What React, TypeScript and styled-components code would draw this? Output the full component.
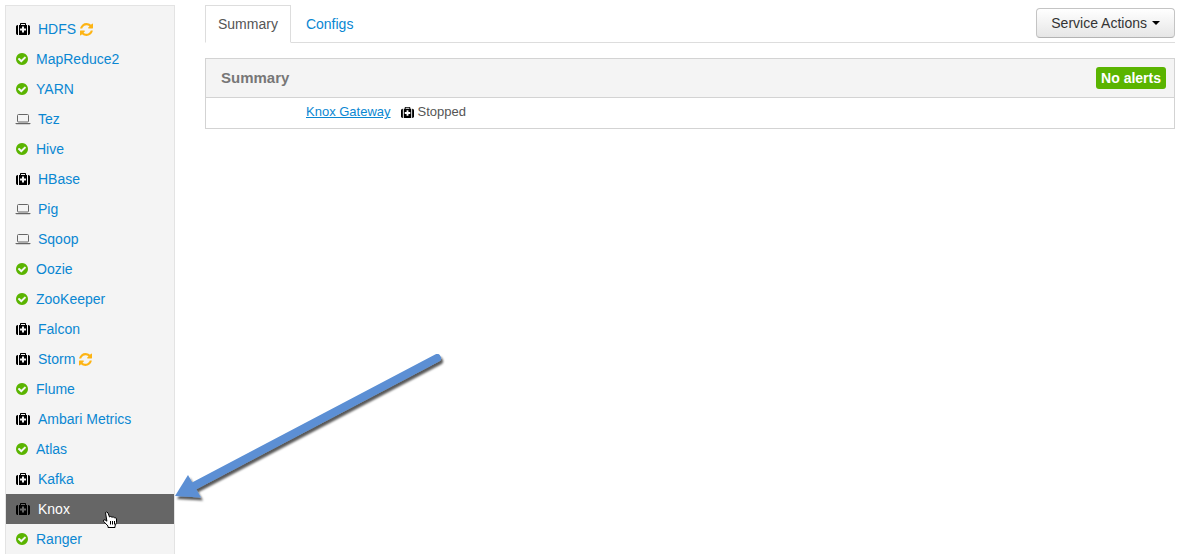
import React from "react";
import styled, { createGlobalStyle } from "styled-components";

const GlobalStyle = createGlobalStyle`
  * { box-sizing: border-box; }
  body {
    margin: 0;
    background: #fff;
    color: #333;
    font: 14px/20px "Liberation Sans", Arial, sans-serif;
  }
  a { color: #0a87d2; text-decoration: none; }
`;

const Page = styled.div`
  position: relative;
  display: flex;
  align-items: stretch;
  gap: 30px;
  min-height: 100vh;
  padding: 5px 10px 0 5px;
`;

const Sidebar = styled.nav`
  flex: 0 0 170px;
  background: #f4f4f4;
  border: 1px solid #e3e3e3;
  border-bottom: 0;
`;

const ServiceList = styled.ul`
  list-style: none;
  margin: 0;
  padding: 8px 0 0;
`;

const ServiceLink = styled.a<{ $active?: boolean }>`
  display: flex;
  align-items: center;
  height: 30px;
  padding: 0 10px;
  gap: 8px;
  background: ${(p) => (p.$active ? "#666" : "transparent")};
  && { color: ${(p) => (p.$active ? "#fff" : "#0a87d2")}; }
`;

const ServiceName = styled.span`
  display: flex;
  align-items: center;
  gap: 4px;
`;

const Main = styled.main`
  flex: 1;
  min-width: 0;
`;

const TabBar = styled.div`
  display: flex;
  justify-content: space-between;
  align-items: flex-start;
  height: 38px;
  border-bottom: 1px solid #ddd;
`;

const Tabs = styled.div`
  display: flex;
  gap: 2px;
`;

const Tab = styled.a<{ $active?: boolean }>`
  height: 38px;
  padding: 8px 12px;
  border: 1px solid ${(p) => (p.$active ? "#ddd" : "transparent")};
  border-bottom-color: ${(p) => (p.$active ? "#fff" : "transparent")};
  && { color: ${(p) => (p.$active ? "#555" : "#0a87d2")}; }
`;

const ActionsButton = styled.button`
  display: flex;
  align-items: center;
  gap: 5px;
  height: 30px;
  margin-top: 3px;
  padding: 0 14px;
  border: 1px solid #c4c4c4;
  border-bottom-color: #b3b3b3;
  border-radius: 4px;
  background: linear-gradient(#fff, #e6e6e6);
  box-shadow: inset 0 1px 0 #fff;
  color: #333;
  font: inherit;
`;

const Caret = styled.span`
  border-top: 4px solid #000;
  border-left: 4px solid transparent;
  border-right: 4px solid transparent;
`;

const Panel = styled.section`
  margin-top: 15px;
  border: 1px solid #d3d3d3;
`;

const PanelHeader = styled.header`
  display: flex;
  align-items: center;
  justify-content: space-between;
  height: 39px;
  padding: 0 8px 0 15px;
  background: #f4f4f4;
  border-bottom: 1px solid #d3d3d3;
`;

const PanelTitle = styled.h4`
  margin: 0;
  color: #777;
  font-size: 15px;
`;

const AlertBadge = styled.span`
  padding: 1px 5px;
  border-radius: 3px;
  background: #5ab400;
  color: #fff;
  font-weight: bold;
`;

const ComponentRow = styled.div`
  display: flex;
  align-items: center;
  gap: 10px;
  height: 30px;
  padding: 0 0 2px 100px;
  font-size: 13px;

  a { text-decoration: underline; }
`;

const Status = styled.span`
  display: flex;
  align-items: center;
  gap: 4px;
  color: #555;
`;

const Overlay = styled.svg`
  position: absolute;
  top: 0;
  left: 0;
  pointer-events: none;
`;

type Health = "stopped" | "ok" | "client";

const MedkitIcon = ({ size = 14 }: { size?: number }) => (
  <svg width={size} height={size} viewBox="0 0 1792 1792" fill="#000" aria-hidden="true">
    <path d="M1280 1056v-192q0-14-9-23t-23-9h-224v-224q0-14-9-23t-23-9h-192q-14 0-23 9t-9 23v224h-224q-14 0-23 9t-9 23v192q0 14 9 23t23 9h224v224q0 14 9 23t23 9h192q14 0 23-9t9-23v-224h224q14 0 23-9t9-23zm-640-672h512v-128h-512v128zm-384 0v1280h-32q-92 0-158-66t-66-158v-832q0-92 66-158t158-66h32zm1152 0v1280h-1024v-1280h128v-160q0-40 28-68t68-28h576q40 0 68 28t28 68v160h128zm384 224v832q0 92-66 158t-158 66h-32v-1280h32q92 0 158 66t66 158z" />
  </svg>
);

const CheckIcon = () => (
  <svg width="12" height="12" viewBox="128 128 1536 1536" fill="#5ab400" aria-hidden="true">
    <path d="M1412 734q0-28-18-46l-91-90q-19-19-45-19t-45 19l-408 407-226-226q-19-19-45-19t-45 19l-91 90q-18 18-18 46 0 27 18 45l362 362q19 19 45 19 27 0 46-19l543-543q18-18 18-45zm252 162q0 209-103 385.5t-279.5 279.5-385.5 103-385.5-103-279.5-279.5-103-385.5 103-385.5 279.5-279.5 385.5-103 385.5 103 279.5 279.5 103 385.5z" />
  </svg>
);

const LaptopIcon = () => (
  <svg width="14" height="12" viewBox="0 0 14 12" aria-hidden="true" overflow="visible">
    <rect x="1.500" y="1.500" width="11" height="7.500" rx="1" fill="none" stroke="#666" />
    <path d="M-.5 10h15v.4q0 .8-1 .8h-13q-1 0-1-.8z" fill="#666" />
  </svg>
);

const RefreshIcon = () => (
  <svg width="13" height="13" viewBox="0 0 1536 1536" fill="#fdb414" role="img" aria-label="Restart required">
    <path d="M1511 928q0 5-1 7-64 268-268 434.5t-478 166.500q-146 0-282.500-55t-243.500-157l-129 129q-19 19-45 19t-45-19-19-45v-448q0-26 19-45t45-19h448q26 0 45 19t19 45-19 45l-137 137q71 66 161 102t187 36q134 0 250-65t186-179q11-17 53-117 8-23 30-23h192q13 0 22.500 9.500t9.500 22.500zm25-800v448q0 26-19 45t-45 19h-448q-26 0-45-19t-19-45 19-45l138-138q-148-137-349-137-134 0-250 65t-186 179q-11 17-53 117-8 23-30 23h-199q-13 0-22.500-9.500t-9.500-22.500v-7q65-268 270-434.500t480-166.500q146 0 284 55.500t245 156.500l130-129q19-19 45-19t45 19 19 45z" />
  </svg>
);

const healthIcons: Record<Health, React.ReactNode> = {
  stopped: <MedkitIcon />,
  ok: <CheckIcon />,
  client: <LaptopIcon />,
};

const services: { name: string; health: Health; restart?: boolean; active?: boolean }[] = [
  { name: "HDFS", health: "stopped", restart: true },
  { name: "MapReduce2", health: "ok" },
  { name: "YARN", health: "ok" },
  { name: "Tez", health: "client" },
  { name: "Hive", health: "ok" },
  { name: "HBase", health: "stopped" },
  { name: "Pig", health: "client" },
  { name: "Sqoop", health: "client" },
  { name: "Oozie", health: "ok" },
  { name: "ZooKeeper", health: "ok" },
  { name: "Falcon", health: "stopped" },
  { name: "Storm", health: "stopped", restart: true },
  { name: "Flume", health: "ok" },
  { name: "Ambari Metrics", health: "stopped" },
  { name: "Atlas", health: "ok" },
  { name: "Kafka", health: "stopped" },
  { name: "Knox", health: "stopped", active: true },
  { name: "Ranger", health: "ok" },
];

export default function App() {
  return (
    <Page>
      <GlobalStyle />
      <Sidebar aria-label="Services">
        <ServiceList>
          {services.map((s) => (
            <li key={s.name}>
              <ServiceLink href="#" $active={s.active}>
                {healthIcons[s.health]}
                <ServiceName>
                  {s.name}
                  {s.restart && <RefreshIcon />}
                </ServiceName>
              </ServiceLink>
            </li>
          ))}
        </ServiceList>
      </Sidebar>
      <Main>
        <TabBar>
          <Tabs>
            <Tab href="#" $active>Summary</Tab>
            <Tab href="#">Configs</Tab>
          </Tabs>
          <ActionsButton type="button">
            Service Actions <Caret />
          </ActionsButton>
        </TabBar>
        <Panel>
          <PanelHeader>
            <PanelTitle>Summary</PanelTitle>
            <AlertBadge>No alerts</AlertBadge>
          </PanelHeader>
          <ComponentRow>
            <a href="#">Knox Gateway</a>
            <Status>
              <MedkitIcon size={13} />
              Stopped
            </Status>
          </ComponentRow>
        </Panel>
      </Main>
      <Overlay width="460" height="550" viewBox="0 0 460 550" aria-hidden="true">
        <defs>
          <filter id="arrowShadow" x="-10%" y="-10%" width="120%" height="120%">
            <feDropShadow dx="2" dy="3" stdDeviation="1" floodColor="#000" floodOpacity="0.65" />
          </filter>
        </defs>
        <g filter="url(#arrowShadow)" fill="#5b8fd4">
          <path d="M437 358L192 487" stroke="#5b8fd4" strokeWidth="8" strokeLinecap="round" />
          <path d="M175 496L188 475L201 497.500Z" />
        </g>
        <path
          d="M105.500 512.500q1.500-1.500 2.500.5l1.500 4q1-1.200 2.500.2q1.200-.9 2.300.5q1.700-.7 2.200 1.300v3.500l-1.500 3.500v1.500h-7v-1.500l-4.300-4.500q-.7-2 1.200-1.800l2 1.500z"
          fill="#fff"
          stroke="#000"
          strokeLinejoin="round"
        />
        <path d="M110.500 521v3.500M112.500 521v3.500M114.500 521v3.500" stroke="#000" strokeWidth="1" />
      </Overlay>
    </Page>
  );
}
